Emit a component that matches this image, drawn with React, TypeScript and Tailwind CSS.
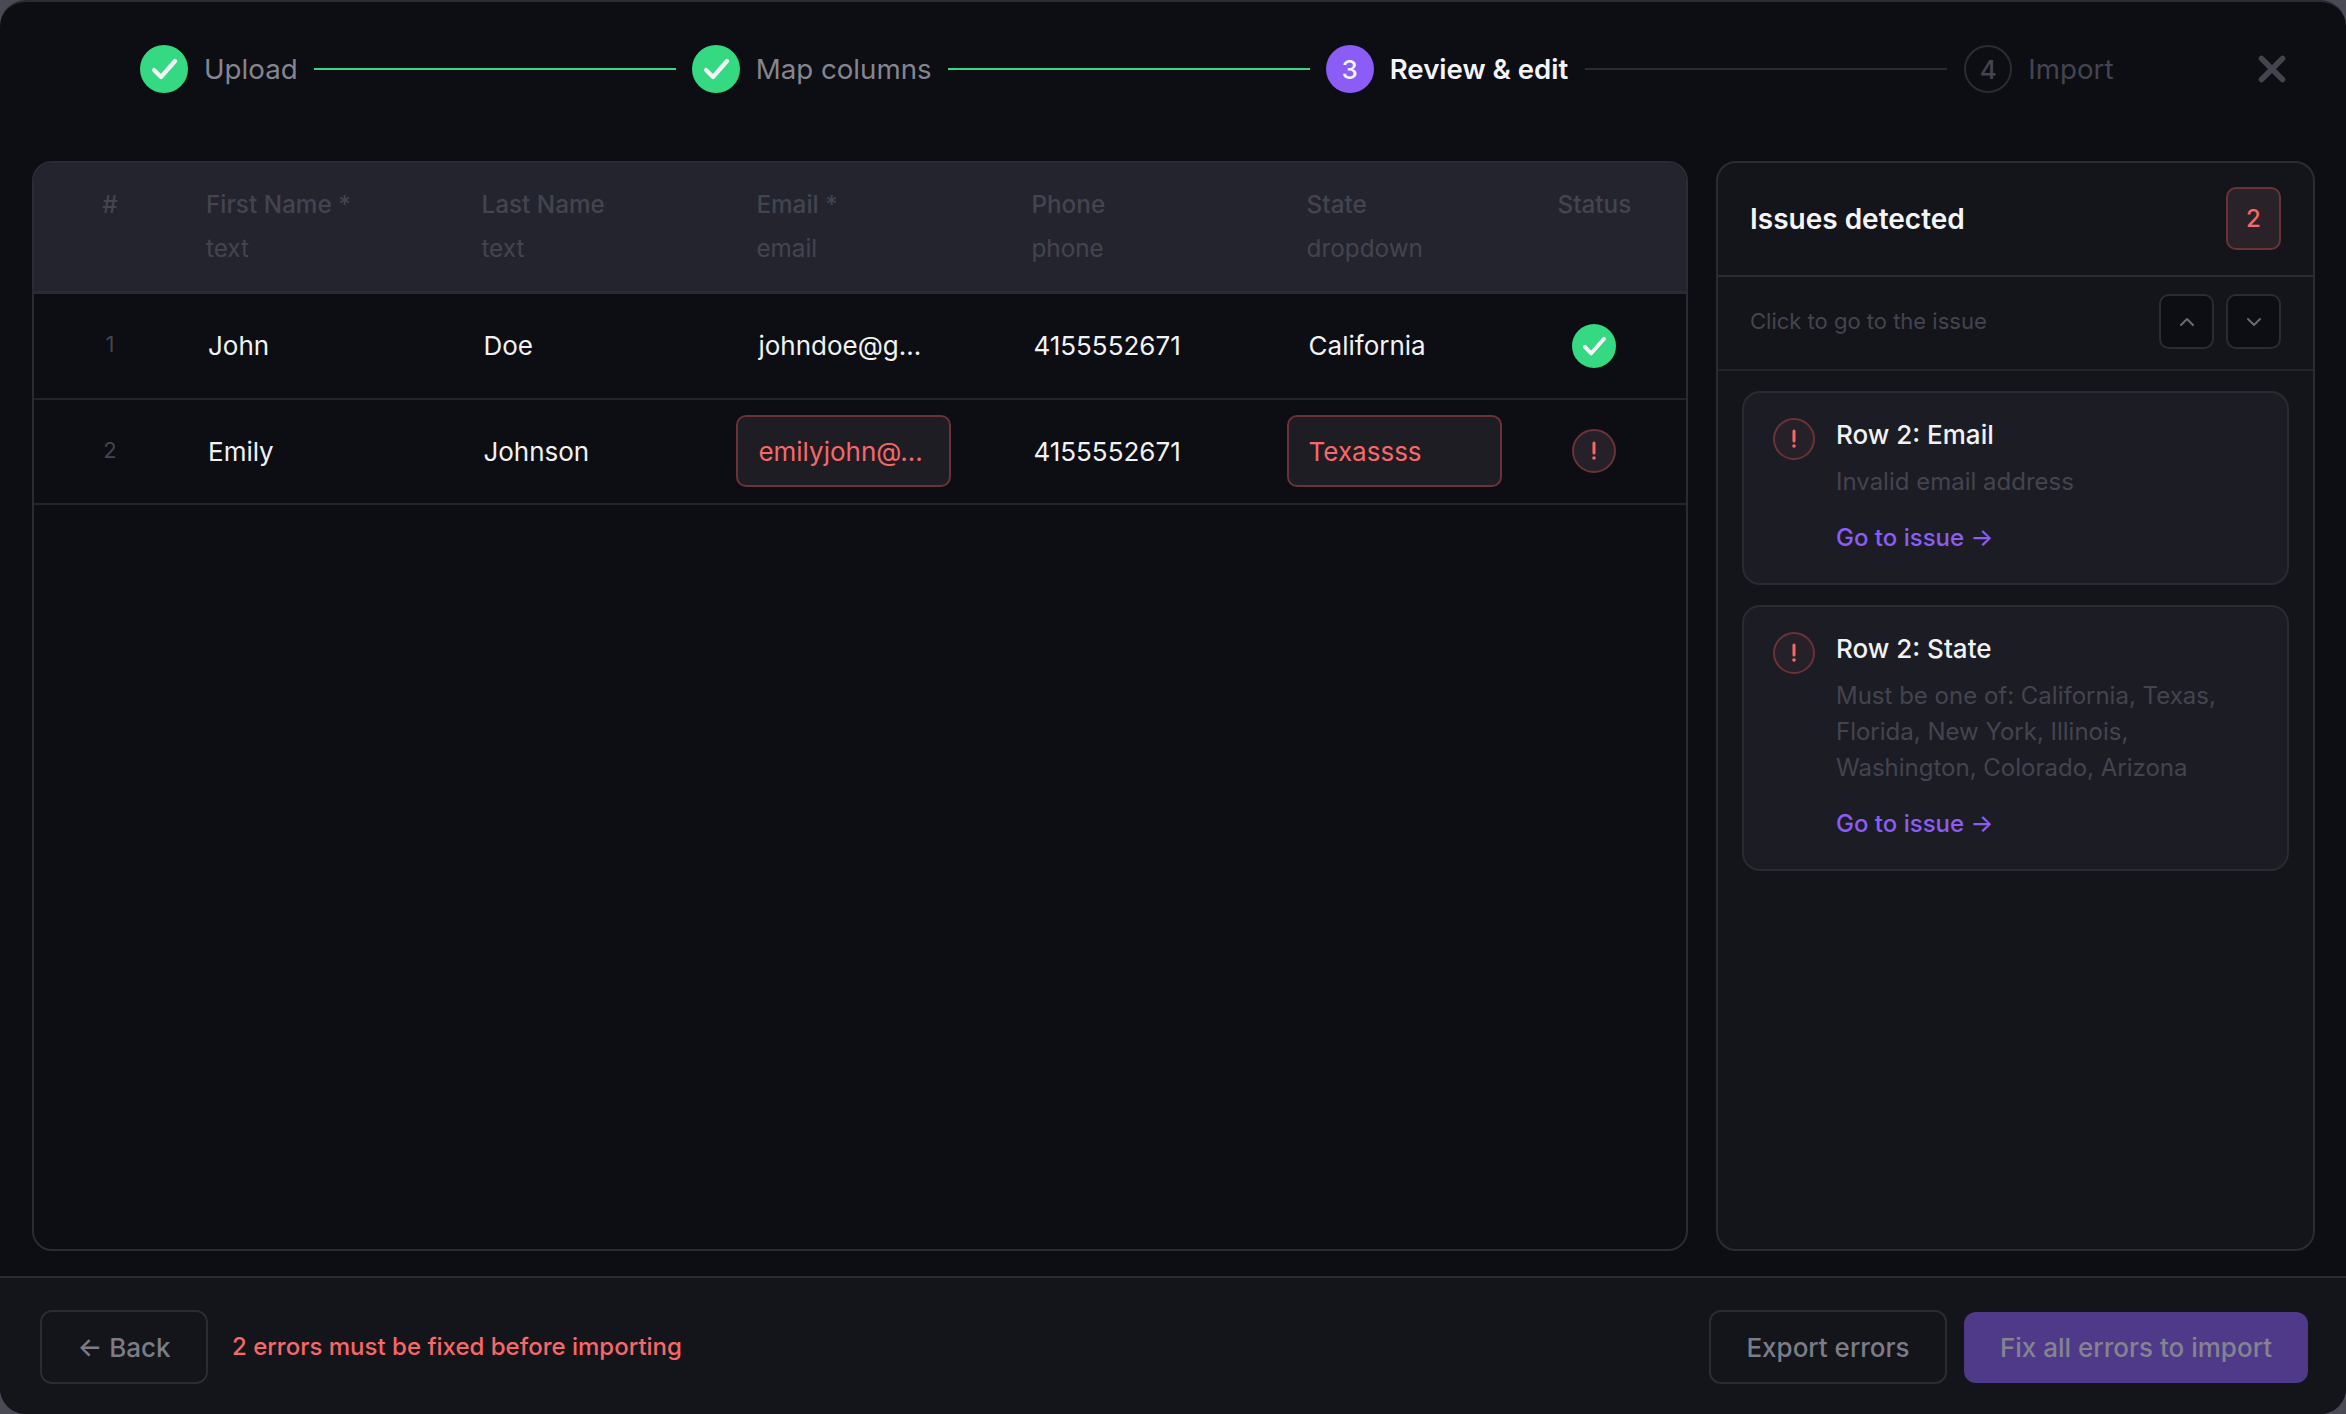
import React from 'react';
import { ChevronDown, ChevronUp, X } from 'lucide-react';

const STEP_LINE = 'h-[2px] w-[362px]';

const columns = [
  { label: 'First Name *', type: 'text' },
  { label: 'Last Name', type: 'text' },
  { label: 'Email *', type: 'email' },
  { label: 'Phone', type: 'phone' },
  { label: 'State', type: 'dropdown' },
];

const GRID = 'grid grid-cols-[152px_275.4px_275px_275px_275.2px_216.2px_1fr]';

const CheckMark = ({ size }: { size: number }) => (
  <svg width={size} height={size} viewBox="0 0 48 48" fill="none" stroke="#f4f5f7" strokeWidth="4.2" strokeLinecap="round" strokeLinejoin="round">
    <path d="M14 25l7 7 14-16" />
  </svg>
);

const DoneCircle = () => (
  <div className="flex h-12 w-12 shrink-0 items-center justify-center rounded-full bg-[#34d982]">
    <CheckMark size={48} />
  </div>
);

const ErrorIcon = ({ size }: { size: string }) => (
  <div className={`flex shrink-0 items-center justify-center rounded-full border-2 border-[#6b3238] bg-[#262028] ${size}`}>
    <svg width="24" height="24" viewBox="0 0 24 24" className="text-[#f76868]">
      <line x1="12" y1="4" x2="12" y2="14" stroke="currentColor" strokeWidth="3" strokeLinecap="round" />
      <circle cx="12" cy="19" r="1.8" fill="currentColor" />
    </svg>
  </div>
);

const Cell = ({ value }: { value: string }) => (
  <div className="flex items-center pl-[22px] text-[26px] text-[#f1f2f4]">{value}</div>
);

const ErrorCell = ({ value }: { value: string }) => (
  <div className="flex items-center">
    <div className="flex h-[72px] w-[215px] items-center rounded-[10px] border-2 border-[#6b3238] bg-[#1e1d24] pl-[20px] text-[26px] text-[#f76868]">
      {value}
    </div>
  </div>
);

const Row = ({ num, children }: { num: number; children: React.ReactNode }) => (
  <div className={`${GRID} h-[105.5px] border-b-2 border-[#23242c]`}>
    <div className="flex items-center justify-center pb-[2px] text-[22px] text-[#44444f]">{num}</div>
    {children}
  </div>
);

const IssueCard = ({ title, lines }: { title: string; lines: string[] }) => (
  <div className="flex gap-[21px] rounded-[18px] border-2 border-[#292a33] bg-[#1c1c24] pt-[25px] pb-[27px] pl-[29px]">
    <ErrorIcon size="h-[42px] w-[42px]" />
    <div className="flex flex-col">
      <div className="-mt-px text-[26px] leading-[36px] font-medium text-[#f1f2f4]">{title}</div>
      <div className="mt-[11px] flex flex-col text-[24px] leading-[36px] text-[#44444f]">
        {lines.map((l) => (
          <span key={l}>{l}</span>
        ))}
      </div>
      <div className="mt-[20px] text-[24px] leading-[36px] font-medium text-[#8b5cf6]">Go to issue →</div>
    </div>
  </div>
);

const App: React.FC = () => {
  return (
    <div className="h-[1414px] w-[2346px] bg-[#4a4a55] font-['Inter',sans-serif]">
      <div className="flex h-full flex-col overflow-hidden rounded-[26px] border-t-2 border-[#2a2b34] bg-[#0d0e13]">
        {/* Stepper */}
        <div className="relative flex h-[134px] shrink-0 items-center pl-[140px]">
          <DoneCircle />
          <span className="ml-[16px] pt-[1px] text-[27.7px] text-[#85858f]">Upload</span>
          <div className={`mx-4 ${STEP_LINE} bg-[#34d982]`} />
          <DoneCircle />
          <span className="ml-[16px] pt-[1px] text-[27.7px] text-[#85858f]">Map columns</span>
          <div className={`mx-4 ${STEP_LINE} bg-[#34d982]`} />
          <div className="flex h-12 w-12 shrink-0 items-center justify-center rounded-full bg-[#8b5cf6] text-[26px] font-medium text-[#f4f5f7]">3</div>
          <span className="ml-[16px] pt-[1px] text-[27.6px] font-semibold text-[#f4f5f7]">Review &amp; edit</span>
          <div className={`mx-[17px] ${STEP_LINE} bg-[#2a2b34]`} />
          <div className="flex h-12 w-12 shrink-0 items-center justify-center rounded-full border-2 border-[#2a2b34] text-[26px] font-medium text-[#44444f]">4</div>
          <span className="ml-[16px] pt-[1px] text-[27.7px] text-[#44444f]">Import</span>
          <button type="button" className="absolute top-[46px] right-[53px] text-[#44444f]">
            <X size={42} strokeWidth={3.2} />
          </button>
        </div>

        {/* Main */}
        <div className="flex min-h-0 flex-1 gap-[28px] pt-[25px] pr-[31px] pb-[25px] pl-[32px]">
          <div className="w-[1656px] overflow-hidden rounded-[20px] border-2 border-[#2a2b34]">
            <div className={`${GRID} h-[131px] border-b-[3px] border-[#2a2b34] bg-[#23242e] text-[24.3px] text-[#44444f]`}>
              <div className="pt-[23px] text-center leading-[36px] font-medium">#</div>
              {columns.map((c) => (
                <div key={c.label} className="flex flex-col pt-[23px] pl-[20px] leading-[36px]">
                  <span className="font-medium">{c.label}</span>
                  <span className="mt-[8px]">{c.type}</span>
                </div>
              ))}
              <div className="pt-[23px] text-center leading-[36px] font-medium">Status</div>
            </div>
            <Row num={1}>
              <Cell value="John" />
              <Cell value="Doe" />
              <Cell value="johndoe@g..." />
              <Cell value="4155552671" />
              <Cell value="California" />
              <div className="flex items-center justify-center">
                <div className="flex h-[44px] w-[44px] items-center justify-center rounded-full bg-[#34d982]">
                  <CheckMark size={44} />
                </div>
              </div>
            </Row>
            <Row num={2}>
              <Cell value="Emily" />
              <Cell value="Johnson" />
              <ErrorCell value="emilyjohn@..." />
              <Cell value="4155552671" />
              <ErrorCell value="Texassss" />
              <div className="flex items-center justify-center">
                <ErrorIcon size="h-[44px] w-[44px]" />
              </div>
            </Row>
          </div>

          {/* Issues panel */}
          <div className="flex w-[599px] flex-col rounded-[20px] border-2 border-[#2a2b34] bg-[#14151b]">
            <div className="flex h-[114px] shrink-0 items-center justify-between border-b-2 border-[#2a2b34] pr-[32px] pl-[32px]">
              <span className="text-[28px] font-semibold text-[#f4f5f7]">Issues detected</span>
              <div className="-mt-px flex h-[63px] w-[55px] items-center justify-center rounded-[10px] border-2 border-[#6b3238] bg-[#2a2229] text-[24px] font-medium text-[#f76868]">2</div>
            </div>
            <div className="flex h-[94px] shrink-0 items-center justify-between border-b-2 border-[#23242c] pr-[32px] pb-[3px] pl-[32px]">
              <span className="text-[22px] text-[#44444f]">Click to go to the issue</span>
              <div className="flex gap-3">
                <div className="flex h-[55px] w-[55px] items-center justify-center rounded-[10px] border-2 border-[#2a2b34] bg-[#0d0e13] text-[#6a6a75]">
                  <ChevronUp size={24} />
                </div>
                <div className="flex h-[55px] w-[55px] items-center justify-center rounded-[10px] border-2 border-[#2a2b34] bg-[#0d0e13] text-[#6a6a75]">
                  <ChevronDown size={24} />
                </div>
              </div>
            </div>
            <div className="flex flex-col gap-5 px-6 pt-[20px]">
              <IssueCard title="Row 2: Email" lines={['Invalid email address']} />
              <IssueCard
                title="Row 2: State"
                lines={['Must be one of: California, Texas,', 'Florida, New York, Illinois,', 'Washington, Colorado, Arizona']}
              />
            </div>
          </div>
        </div>

        {/* Footer */}
        <div className="flex h-[138px] shrink-0 items-center justify-between border-t-2 border-[#2a2b34] bg-[#14151b] pt-[2px] pr-[38px] pl-[40px]">
          <div className="flex items-center gap-[24px]">
            <button type="button" className="h-[74px] w-[168px] rounded-[12px] border-2 border-[#2a2b34] text-[26px] font-medium text-[#7c7c87]">
              ← Back
            </button>
            <span className="text-[24px] font-medium text-[#f76868]">2 errors must be fixed before importing</span>
          </div>
          <div className="flex items-center gap-[17px]">
            <button type="button" className="h-[74px] w-[238px] rounded-[12px] border-2 border-[#2a2b34] text-[26px] font-medium text-[#7c7c87]">
              Export errors
            </button>
            <button type="button" className="h-[71px] w-[344px] rounded-[12px] bg-[#4f3a8a] text-[26px] font-medium text-[#84838f]">
              Fix all errors to import
            </button>
          </div>
        </div>
      </div>
    </div>
  );
};

export default App;
